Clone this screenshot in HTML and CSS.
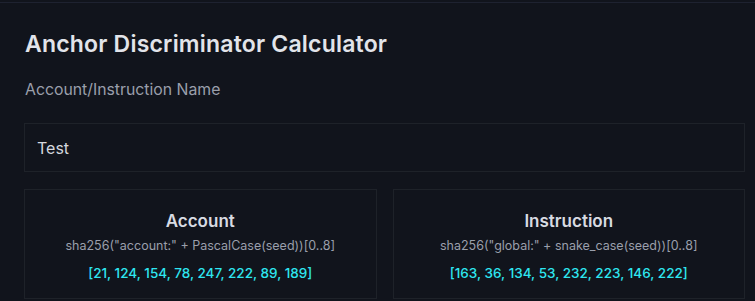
FILE: index.html
```html
<!DOCTYPE html>
<html>
<head>
<meta charset="utf-8">
<link rel="stylesheet" href="styles.css">
</head>
<body>
<div class="page">
  <h1 class="title">Anchor Discriminator Calculator</h1>
  <div class="label">Account/Instruction Name</div>
  <div class="input">Test</div>
  <div class="cards">
    <div class="card">
      <div class="card-title">Account</div>
      <div class="formula">sha256("account:" + PascalCase(seed))[0..8]</div>
      <div class="bytes">[21, 124, 154, 78, 247, 222, 89, 189]</div>
    </div>
    <div class="card">
      <div class="card-title">Instruction</div>
      <div class="formula">sha256("global:" + snake_case(seed))[0..8]</div>
      <div class="bytes">[163, 36, 134, 53, 232, 223, 146, 222]</div>
    </div>
  </div>
</div>
</body>
</html>
```
FILE: styles.css
```css
html, body {
  margin: 0;
  padding: 0;
  background: #11141c;
  font-family: Inter, "Noto Sans", sans-serif;
  overflow: hidden;
}
.page {
  margin-top: 2px;
  border-top: 1px solid #1e2230;
  padding: 0 10px 0 24px;
  height: 300px;
}
.title {
  margin: 26px 0 0 1px;
  font-size: 23px;
  font-weight: 600;
  color: #e2e4ea;
  line-height: 30px;
  letter-spacing: 0.2px;
}
.label {
  margin: 21px 0 0 1px;
  font-size: 15.8px;
  color: #9a9fab;
  line-height: 20px;
}
.input {
  margin-top: 23px;
  height: 49px;
  box-sizing: border-box;
  border: 1px solid #1e2229;
  padding: 0 12px;
  display: flex;
  align-items: center;
  font-size: 16px;
  color: #d4d7de;
}
.cards {
  margin-top: 17px;
  display: grid;
  grid-template-columns: 1fr 1fr;
  gap: 16px;
}
.card {
  border: 1px solid #1e2229;
  height: 110px;
  box-sizing: border-box;
  display: flex;
  flex-direction: column;
  align-items: center;
  padding-top: 19px;
}
.card-title {
  font-size: 17px;
  font-weight: 600;
  color: #d8dbe2;
  line-height: 24px;
}
.formula {
  font-size: 12.5px;
  color: #9a9fab;
  line-height: 18px;
  margin-top: 4px;
}
.bytes {
  margin-top: 9px;
  font-size: 13.5px;
  font-weight: 500;
  color: #2ee6f0;
  line-height: 18px;
}
```
